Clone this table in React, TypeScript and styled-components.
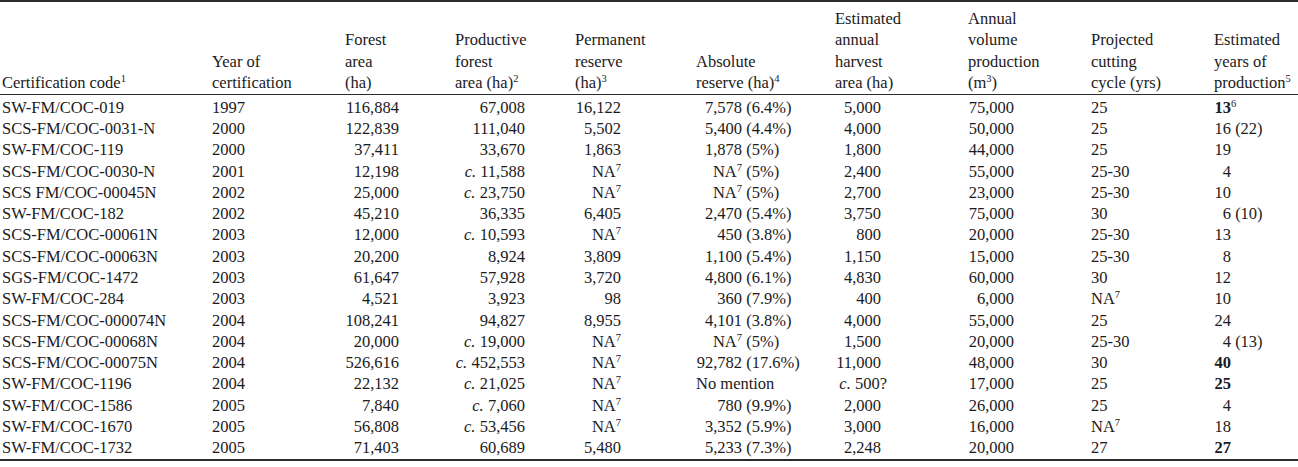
import React from 'react';
import styled, { createGlobalStyle } from 'styled-components';

const GlobalStyle = createGlobalStyle`
  html, body {
    margin: 0;
    padding: 0;
    background: #fff;
  }
  body {
    font-family: "Liberation Serif", "Times New Roman", serif;
    color: #1c1a1b;
  }
`;

const Table = styled.table`
  width: 1298px;
  table-layout: fixed;
  border-collapse: collapse;
  font-size: 16.5px;
`;

const Th = styled.th`
  padding: 6px 0 0;
  font-weight: 400;
  text-align: left;
  vertical-align: bottom;
  line-height: 21.4px;
  white-space: nowrap;
  border-top: 2px solid #2b2b2b;
  border-bottom: 1px solid #2b2b2b;

  &:first-child {
    padding-left: 2px;
  }
`;

const Tr = styled.tr`
  &:first-child td {
    padding-top: 2px;
  }
  &:last-child td {
    padding-bottom: 0;
    border-bottom: 2px solid #2b2b2b;
  }
`;

const Td = styled.td`
  padding: 0;
  line-height: 21.3px;
  white-space: nowrap;
  vertical-align: baseline;

  &:first-child {
    padding-left: 2px;
  }
`;

const Fig = styled.span<{ $w: number; $bold?: boolean }>`
  display: inline-block;
  width: ${(p) => p.$w}px;
  text-align: right;
  font-weight: ${(p) => (p.$bold ? 700 : 400)};
`;

const Sup = styled.span`
  font-size: 10.5px;
  line-height: 0;
  vertical-align: 0.55em;
  font-weight: 400;
`;

const Italic = styled.i`
  font-style: italic;
`;

const Hang = styled.span`
  margin-right: -6px;
`;

// column widths, left edges follow from these
const colWidths = [212, 133, 110, 120, 121, 139, 133, 123, 123, 84];

type Row = {
  code: string;
  year: string;
  forest: string;
  prod: React.ReactNode;
  perm: React.ReactNode;
  abs?: React.ReactNode;
  pct?: string;
  harv: React.ReactNode;
  vol: string;
  cycle: React.ReactNode;
  yrs: string;
  note?: React.ReactNode;
  bold?: boolean;
};

const NA = () => (
  <>
    NA<Sup>7</Sup>
  </>
);

const Circa = ({ v, hang }: { v: string; hang?: string }) => (
  <>
    <Italic>c.</Italic> {v}
    {hang && <Hang>{hang}</Hang>}
  </>
);

const rows: Row[] = [
  { code: 'SW-FM/COC-019', year: '1997', forest: '116,884', prod: '67,008', perm: '16,122', abs: '7,578', pct: '6.4%', harv: '5,000', vol: '75,000', cycle: '25', yrs: '13', note: <Sup>6</Sup>, bold: true },
  { code: 'SCS-FM/COC-0031-N', year: '2000', forest: '122,839', prod: '111,040', perm: '5,502', abs: '5,400', pct: '4.4%', harv: '4,000', vol: '50,000', cycle: '25', yrs: '16', note: ' (22)' },
  { code: 'SW-FM/COC-119', year: '2000', forest: '37,411', prod: '33,670', perm: '1,863', abs: '1,878', pct: '5%', harv: '1,800', vol: '44,000', cycle: '25', yrs: '19' },
  { code: 'SCS-FM/COC-0030-N', year: '2001', forest: '12,198', prod: <Circa v="11,588" />, perm: <NA />, abs: <NA />, pct: '5%', harv: '2,400', vol: '55,000', cycle: '25-30', yrs: '4' },
  { code: 'SCS FM/COC-00045N', year: '2002', forest: '25,000', prod: <Circa v="23,750" />, perm: <NA />, abs: <NA />, pct: '5%', harv: '2,700', vol: '23,000', cycle: '25-30', yrs: '10' },
  { code: 'SW-FM/COC-182', year: '2002', forest: '45,210', prod: '36,335', perm: '6,405', abs: '2,470', pct: '5.4%', harv: '3,750', vol: '75,000', cycle: '30', yrs: '6', note: ' (10)' },
  { code: 'SCS-FM/COC-00061N', year: '2003', forest: '12,000', prod: <Circa v="10,593" />, perm: <NA />, abs: '450', pct: '3.8%', harv: '800', vol: '20,000', cycle: '25-30', yrs: '13' },
  { code: 'SCS-FM/COC-00063N', year: '2003', forest: '20,200', prod: '8,924', perm: '3,809', abs: '1,100', pct: '5.4%', harv: '1,150', vol: '15,000', cycle: '25-30', yrs: '8' },
  { code: 'SGS-FM/COC-1472', year: '2003', forest: '61,647', prod: '57,928', perm: '3,720', abs: '4,800', pct: '6.1%', harv: '4,830', vol: '60,000', cycle: '30', yrs: '12' },
  { code: 'SW-FM/COC-284', year: '2003', forest: '4,521', prod: '3,923', perm: '98', abs: '360', pct: '7.9%', harv: '400', vol: '6,000', cycle: <NA />, yrs: '10' },
  { code: 'SCS-FM/COC-000074N', year: '2004', forest: '108,241', prod: '94,827', perm: '8,955', abs: '4,101', pct: '3.8%', harv: '4,000', vol: '55,000', cycle: '25', yrs: '24' },
  { code: 'SCS-FM/COC-00068N', year: '2004', forest: '20,000', prod: <Circa v="19,000" />, perm: <NA />, abs: <NA />, pct: '5%', harv: '1,500', vol: '20,000', cycle: '25-30', yrs: '4', note: ' (13)' },
  { code: 'SCS-FM/COC-00075N', year: '2004', forest: '526,616', prod: <Circa v="452,553" />, perm: <NA />, abs: '92,782', pct: '17.6%', harv: '11,000', vol: '48,000', cycle: '30', yrs: '40', bold: true },
  { code: 'SW-FM/COC-1196', year: '2004', forest: '22,132', prod: <Circa v="21,025" />, perm: <NA />, harv: <Circa v="500" hang="?" />, vol: '17,000', cycle: '25', yrs: '25', bold: true },
  { code: 'SW-FM/COC-1586', year: '2005', forest: '7,840', prod: <Circa v="7,060" />, perm: <NA />, abs: '780', pct: '9.9%', harv: '2,000', vol: '26,000', cycle: '25', yrs: '4' },
  { code: 'SW-FM/COC-1670', year: '2005', forest: '56,808', prod: <Circa v="53,456" />, perm: <NA />, abs: '3,352', pct: '5.9%', harv: '3,000', vol: '16,000', cycle: <NA />, yrs: '18' },
  { code: 'SW-FM/COC-1732', year: '2005', forest: '71,403', prod: '60,689', perm: '5,480', abs: '5,233', pct: '7.3%', harv: '2,248', vol: '20,000', cycle: '27', yrs: '27', bold: true },
];

const headers: React.ReactNode[] = [
  <>Certification code<Sup>1</Sup></>,
  <>Year of<br />certification</>,
  <>Forest<br />area<br />(ha)</>,
  <>Productive<br />forest<br />area (ha)<Sup>2</Sup></>,
  <>Permanent<br />reserve<br />(ha)<Sup>3</Sup></>,
  <>Absolute<br />reserve (ha)<Sup>4</Sup></>,
  <>Estimated<br />annual<br />harvest<br />area (ha)</>,
  <>Annual<br />volume<br />production<br />(m<Sup>3</Sup>)</>,
  <>Projected<br />cutting<br />cycle (yrs)</>,
  <>Estimated<br />years of<br />production<Sup>5</Sup></>,
];

export default function App() {
  return (
    <>
      <GlobalStyle />
      <Table>
        <colgroup>
          {colWidths.map((w, i) => (
            <col key={i} style={{ width: w }} />
          ))}
        </colgroup>
        <thead>
          <tr>
            {headers.map((h, i) => (
              <Th key={i}>{h}</Th>
            ))}
          </tr>
        </thead>
        <tbody>
          {rows.map((r) => (
            <Tr key={r.code}>
              <Td>{r.code}</Td>
              <Td>{r.year}</Td>
              <Td>
                <Fig $w={54}>{r.forest}</Fig>
              </Td>
              <Td>
                <Fig $w={70}>{r.prod}</Fig>
              </Td>
              <Td>
                <Fig $w={46}>{r.perm}</Fig>
              </Td>
              <Td>
                {r.abs ? (
                  <>
                    <Fig $w={46}>{r.abs}</Fig> ({r.pct})
                  </>
                ) : (
                  'No mention'
                )}
              </Td>
              <Td>
                <Fig $w={46}>{r.harv}</Fig>
              </Td>
              <Td>
                <Fig $w={46}>{r.vol}</Fig>
              </Td>
              <Td>{r.cycle}</Td>
              <Td>
                <Fig $w={17} $bold={r.bold}>
                  {r.yrs}
                </Fig>
                {r.note}
              </Td>
            </Tr>
          ))}
        </tbody>
      </Table>
    </>
  );
}
